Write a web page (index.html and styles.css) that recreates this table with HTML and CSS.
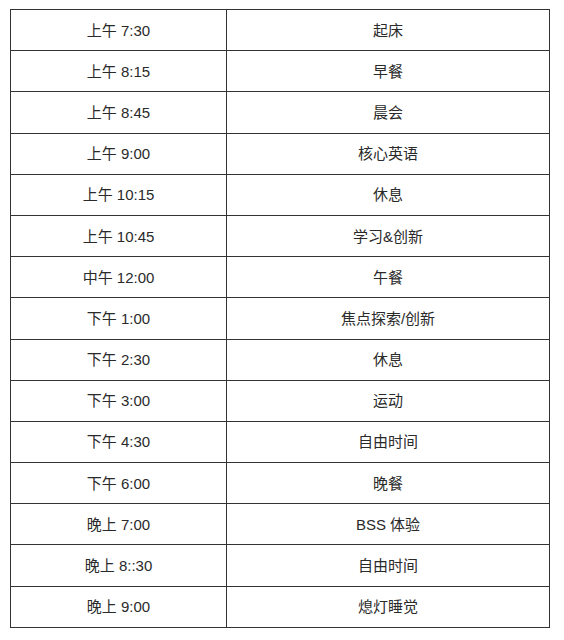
FILE: index.html
```html
<!DOCTYPE html>
<html lang="zh">
<head>
<meta charset="utf-8">
<link rel="stylesheet" href="styles.css">
</head>
<body>
<table class="schedule">
<tbody>
<tr><td class="time">上午 7:30</td><td class="act">起床</td></tr>
<tr><td class="time">上午 8:15</td><td class="act">早餐</td></tr>
<tr><td class="time">上午 8:45</td><td class="act">晨会</td></tr>
<tr><td class="time">上午 9:00</td><td class="act">核心英语</td></tr>
<tr><td class="time">上午 10:15</td><td class="act">休息</td></tr>
<tr><td class="time">上午 10:45</td><td class="act">学习&amp;创新</td></tr>
<tr><td class="time">中午 12:00</td><td class="act">午餐</td></tr>
<tr><td class="time">下午 1:00</td><td class="act">焦点探索/创新</td></tr>
<tr><td class="time">下午 2:30</td><td class="act">休息</td></tr>
<tr><td class="time">下午 3:00</td><td class="act">运动</td></tr>
<tr><td class="time">下午 4:30</td><td class="act">自由时间</td></tr>
<tr><td class="time">下午 6:00</td><td class="act">晚餐</td></tr>
<tr><td class="time">晚上 7:00</td><td class="act">BSS 体验</td></tr>
<tr><td class="time">晚上 8::30</td><td class="act">自由时间</td></tr>
<tr><td class="time">晚上 9:00</td><td class="act">熄灯睡觉</td></tr>
</tbody>
</table>
</body>
</html>
```
FILE: styles.css
```css
html, body {
  margin: 0;
  padding: 0;
  background: #ffffff;
}
body {
  font-family: "Liberation Sans", "Noto Sans CJK SC", sans-serif;
  font-size: 15px;
  color: #2a2a2a;
}
.schedule {
  border-collapse: collapse;
  margin: 9px 0 0 10px;
  width: 540px;
  table-layout: fixed;
}
.schedule td {
  border: 1px solid #333;
  height: 39.2px;
  padding: 1px 0 0 0;
  text-align: center;
  vertical-align: middle;
  line-height: 20px;
}
.schedule td.time {
  width: 215px;
}
```
